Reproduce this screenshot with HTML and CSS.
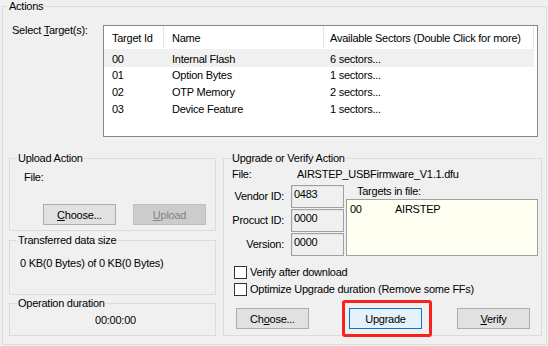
FILE: index.html
```html
<!DOCTYPE html>
<html lang="en">
<head>
    <meta charset="UTF-8">
    <title>DfuSe Demo - Actions</title>
    <link rel="stylesheet" href="styles.css">
</head>
<body>
    <div class="group actions">
        <span class="group-title">Actions</span>

        <div class="select-row">
            <div class="select-label">Select <u>T</u>arget(s):</div>
            <div class="target-list">
                <div class="list-row list-head">
                    <div class="col col-id">Target Id</div>
                    <div class="col col-name">Name</div>
                    <div class="col col-sectors">Available Sectors (Double Click for more)</div>
                </div>
                <div class="list-row selected">
                    <div class="col col-id">00</div>
                    <div class="col col-name">Internal Flash</div>
                    <div class="col col-sectors">6 sectors...</div>
                </div>
                <div class="list-row">
                    <div class="col col-id">01</div>
                    <div class="col col-name">Option Bytes</div>
                    <div class="col col-sectors">1 sectors...</div>
                </div>
                <div class="list-row">
                    <div class="col col-id">02</div>
                    <div class="col col-name">OTP Memory</div>
                    <div class="col col-sectors">2 sectors...</div>
                </div>
                <div class="list-row">
                    <div class="col col-id">03</div>
                    <div class="col col-name">Device Feature</div>
                    <div class="col col-sectors">1 sectors...</div>
                </div>
            </div>
        </div>

        <div class="lower">
            <div class="left-col">
                <div class="group upload">
                    <span class="group-title">Upload Action</span>
                    <div class="upload-file">File:</div>
                    <div class="upload-buttons">
                        <button class="btn"><u>C</u>hoose...</button>
                        <button class="btn" disabled><u>U</u>pload</button>
                    </div>
                </div>
                <div class="group transfer">
                    <span class="group-title">Transferred data size</span>
                    <div class="transfer-text">0 KB(0 Bytes) of 0 KB(0 Bytes)</div>
                </div>
                <div class="group duration">
                    <span class="group-title">Operation duration</span>
                    <div class="duration-text">00:00:00</div>
                </div>
            </div>

            <div class="group upgrade">
                <span class="group-title">Upgrade or Verify Action</span>
                <div class="file-row">
                    <span>File:</span>
                    <span>AIRSTEP_USBFirmware_V1.1.dfu</span>
                </div>
                <div class="id-grid">
                    <div class="id-label">Vendor ID:</div>
                    <div class="id-box">0483</div>
                    <div class="targets-cell">
                        <div class="targets-label">Targets in file:</div>
                        <div class="targets-box">
                            <span class="t-id">00</span><span>AIRSTEP</span>
                        </div>
                    </div>
                    <div class="id-label">Procuct ID:</div>
                    <div class="id-box">0000</div>
                    <div class="id-label">Version:</div>
                    <div class="id-box">0000</div>
                </div>
                <label class="check"><span class="check-box"></span>Verify after download</label>
                <label class="check"><span class="check-box"></span>Optimize Upgrade duration (Remove some FFs)</label>
                <div class="upgrade-buttons">
                    <button class="btn">Ch<u>o</u>ose...</button>
                    <button class="btn btn-default">Upgrade</button>
                    <button class="btn"><u>V</u>erify</button>
                </div>
                <div class="highlight"></div>
            </div>
        </div>
    </div>
</body>
</html>
```

FILE: styles.css
```css
* {
    box-sizing: border-box;
}
body {
    margin: 0;
    width: 548px;
    height: 346px;
    overflow: hidden;
    background: #f0f0f0;
    font-family: 'Liberation Sans', Arial, sans-serif;
    font-size: 11px;
    line-height: 13px;
    letter-spacing: -0.25px;
    color: #000;
}
u {
    text-decoration-thickness: 1px;
    text-underline-offset: 1px;
}
.group {
    position: relative;
    border: 1px solid #dcdcdc;
}
.group-title {
    position: absolute;
    top: -7px;
    left: 7px;
    padding: 0 1px;
    background: #f0f0f0;
    line-height: 13px;
    white-space: nowrap;
}
.actions {
    width: 545px;
    height: 339px;
    margin: 6px 0 0 2px;
}
.actions > .group-title {
    left: 5px;
}

/* target list */
.select-row {
    display: grid;
    grid-template-columns: 100px 435px;
    padding-top: 18px;
}
.select-label {
    padding-left: 9px;
    margin-top: -1px;
}
.target-list {
    height: 112px;
    border: 1px solid #828790;
    background: #fff;
}
.list-row {
    display: flex;
    width: 430px;
    height: 17px;
    line-height: 17px;
}
.list-head {
    height: 22px;
    line-height: 24px;
    margin-bottom: 1px;
}
.list-row.selected {
    background: #f0f0f0;
    height: 18px;
    line-height: 20px;
}
.col {
    padding-left: 8px;
    white-space: nowrap;
}
.col-id { width: 60px; }
.col-name { width: 160px; }
.col-sectors { width: 210px; padding-left: 6px; }
.list-head .col {
    border-right: 1px solid #e5e5e5;
}

/* lower part */
.lower {
    display: grid;
    grid-template-columns: 207px 319px;
    column-gap: 7px;
    margin: 21px 0 0 6px;
}
.left-col {
    display: flex;
    flex-direction: column;
}
.upload {
    height: 73px;
    margin-bottom: 9px;
}
.upload-file {
    margin: 12px 0 0 14px;
}
.upload-buttons {
    display: flex;
    gap: 17px;
    margin: 20px 0 0 33px;
}
.transfer {
    height: 55px;
    margin-bottom: 8px;
}
.transfer-text {
    margin: 16px 0 0 10px;
}
.duration {
    height: 33px;
}
.duration-text {
    padding: 10px 0 0 6px;
    text-align: center;
}

.btn {
    width: 73px;
    height: 21px;
    padding: 0;
    border: 1px solid #adadad;
    background: #e1e1e1;
    font-family: inherit;
    font-size: 11px;
    letter-spacing: inherit;
    color: #000;
}
.btn:disabled {
    border-color: #bfbfbf;
    background: #cccccc;
    color: #838383;
}
.btn-default {
    border-color: #0078d7;
    background: #e5f1fb;
}

/* upgrade */
.upgrade {
    height: 178px;
}
.file-row {
    display: grid;
    grid-template-columns: 65px auto;
    margin: 9px 0 0 8px;
}
.id-grid {
    display: grid;
    grid-template-columns: 67px 53px 194px;
    grid-template-rows: 23px 23px 23px;
    row-gap: 1px;
    margin-top: 4px;
}
.id-label {
    align-self: center;
    text-align: right;
    padding-right: 7px;
    line-height: 13px;
}
.id-box {
    border: 1px solid #a0a0a0;
    box-shadow: inset 1px 1px 0 #e3e3e3;
    padding: 2px 0 0 2px;
}
.targets-cell {
    grid-column: 3;
    grid-row: 1 / span 3;
    display: flex;
    flex-direction: column;
    margin-left: 2px;
    width: 192px;
}
.targets-label {
    height: 14px;
    padding-left: 11px;
}
.targets-box {
    flex: 1;
    border: 1px solid #a0a0a0;
    background: #fffff2;
    padding: 3px 0 0 3px;
}
.t-id {
    display: inline-block;
    width: 45px;
}
.check {
    display: flex;
    align-items: center;
    gap: 3px;
    margin-left: 10px;
    height: 13px;
}
.check:first-of-type {
    margin-top: 10px;
}
.check + .check {
    margin-top: 4px;
}
.check-box {
    width: 13px;
    height: 13px;
    border: 1px solid #333;
    background: #fff;
}
.upgrade-buttons {
    display: flex;
    margin: 12px 0 0 12px;
}
.upgrade-buttons .btn + .btn {
    margin-left: 40px;
}
.upgrade-buttons .btn:last-child {
    margin-left: 35px;
}
.highlight {
    position: absolute;
    left: 118px;
    top: 141px;
    width: 90px;
    height: 37px;
    border: 3px solid #f5221e;
    border-radius: 3px;
}
```
